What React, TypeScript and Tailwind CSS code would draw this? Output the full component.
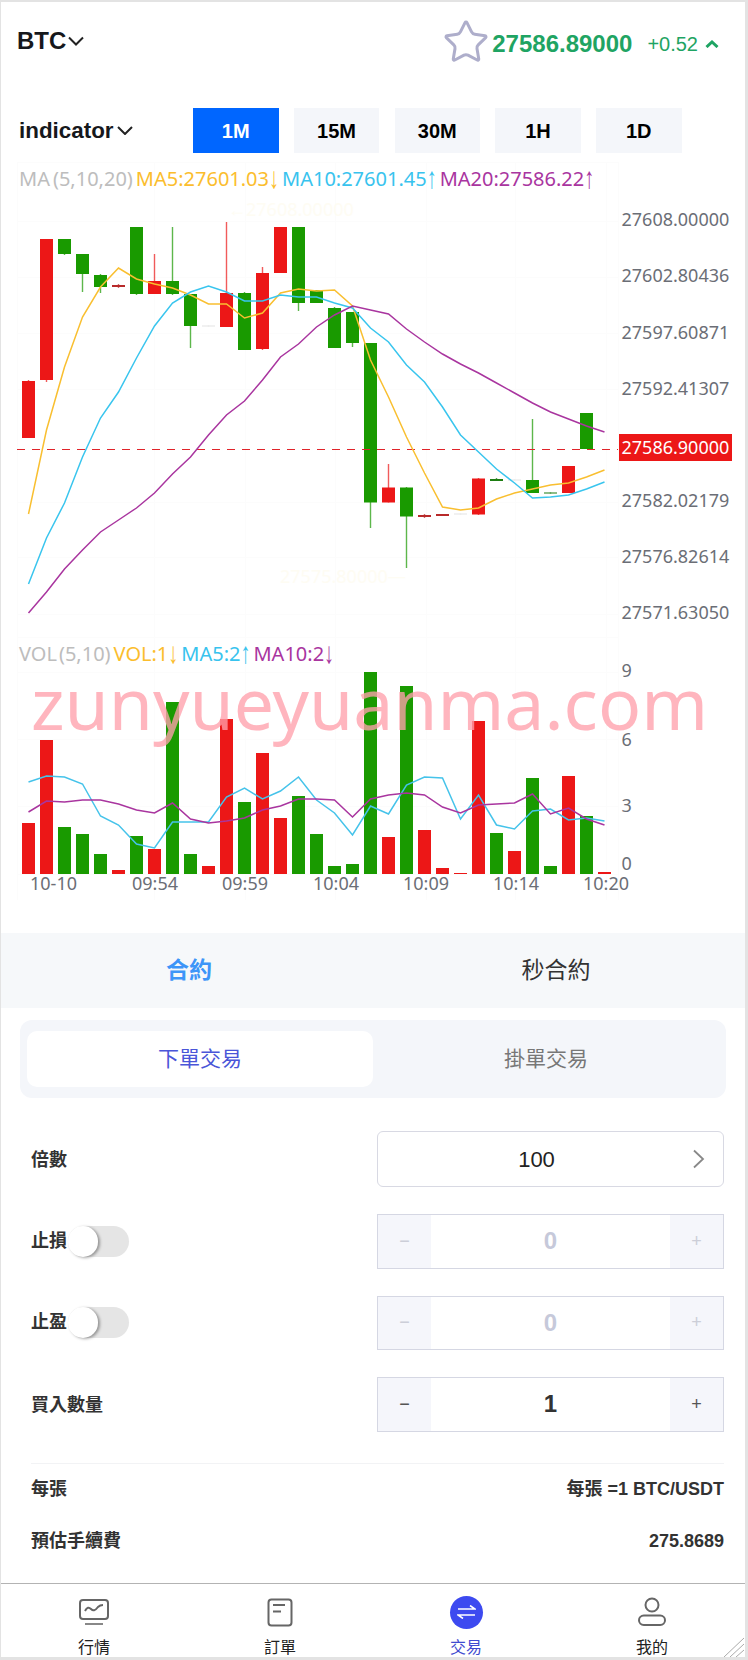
import { Star } from 'lucide-react'

const UP = '#199a00'
const DOWN = '#ec1717'

// top, bottom, wick top, wick bottom, colour - page coordinates
const candles: [number, number, number, number, string][] = [
  [381, 438, 380, 438, DOWN],
  [239, 380, 239, 382, DOWN],
  [239, 254, 239, 255, UP],
  [254, 274, 254, 292, UP],
  [275, 287, 274, 293, UP],
  [285, 287, 284, 288, '#b82a2a'],
  [227, 294, 227, 295, UP],
  [281, 294, 254, 294, DOWN],
  [281, 294, 227, 295, UP],
  [294, 326, 294, 348, UP],
  [325.5, 326.5, 325.5, 326.5, '#e4e4e4'],
  [293, 327, 222, 327, DOWN],
  [293, 350, 292, 350, UP],
  [273, 349, 267, 350, DOWN],
  [227, 273, 227, 273, DOWN],
  [227, 303, 227, 311, UP],
  [290, 303, 290, 303, UP],
  [308, 348, 307, 348, UP],
  [312, 343, 312, 347, UP],
  [343, 502.5, 343, 528, UP],
  [487.5, 502.5, 464, 502.5, DOWN],
  [487.5, 516.5, 487, 568, UP],
  [515, 517, 514, 518, '#b82a2a'],
  [514, 516, 514, 516, '#b82a2a'],
  [513.5, 514.5, 513.5, 514.5, '#e4e4e4'],
  [478.5, 514.5, 478, 515, DOWN],
  [479, 481, 478, 481, '#1d7d12'],
  [479.5, 480.5, 479.5, 480.5, '#e4e4e4'],
  [480, 493, 419, 493, UP],
  [492.5, 493.5, 492.5, 493.5, '#1d7d12'],
  [466, 493, 466, 493, DOWN],
  [413, 449, 413, 449, UP],
]

const ma5 = [514, 430, 367, 317, 287, 268, 279, 284, 288, 295, 304, 304, 318, 313, 293, 289, 291, 290, 306, 360, 397, 437, 473, 507, 510, 508, 499, 493, 489, 485, 483, 477, 470]
const ma10 = [584, 538, 503, 457, 418, 392, 358, 326, 303, 292, 286, 292, 301, 301, 295, 297, 297, 303, 308, 328, 342, 365, 382, 407, 435, 452, 469, 483, 498, 497, 495, 489, 482]
const ma20 = [613, 592, 569, 550, 532, 520, 508, 493, 474, 457, 435, 415, 401, 380, 357, 344, 327, 315, 306, 310, 314, 329, 342, 354, 364, 373, 383, 393, 403, 412, 419, 426, 432]

// top of each volume bar, baseline at 874
const volumes: [number, string][] = [
  [823, DOWN], [740, DOWN], [827, UP], [834, UP], [854, UP], [870, DOWN], [836, UP], [849, DOWN], [702, UP], [854, UP], [866, DOWN],
  [719, DOWN], [802, UP], [753, DOWN], [818, DOWN], [796, UP], [834, UP], [866, UP], [864, UP], [672, UP], [837, DOWN], [686, UP],
  [830, DOWN], [868, DOWN], [873, DOWN], [721, DOWN], [833, UP], [851, DOWN], [778, UP], [866, UP], [776, DOWN], [816, UP], [872, DOWN],
]
const volMa5 = [782, 776, 777, 784, 816, 825, 844, 848, 822, 822, 822, 797, 788, 799, 791, 777, 800, 813, 835, 806, 814, 785, 777, 778, 819, 795, 825, 829, 811, 809, 820, 818, 821]
const volMa10 = [812, 801, 802, 800, 800, 804, 810, 813, 803, 819, 823, 821, 818, 810, 806, 799, 799, 800, 817, 799, 795, 793, 795, 807, 813, 805, 804, 803, 794, 814, 808, 819, 825]

const priceLabels: [string, number][] = [
  ['27608.00000', 219],
  ['27602.80436', 275],
  ['27597.60871', 332],
  ['27592.41307', 388],
  ['27582.02179', 500],
  ['27576.82614', 556],
  ['27571.63050', 612],
]
const volLabels: [string, number][] = [
  ['9', 670],
  ['6', 739],
  ['3', 805],
  ['0', 863],
]
const timeLabels: [string, number][] = [
  ['10-10', 30],
  ['09:54', 132],
  ['09:59', 222],
  ['10:04', 313],
  ['10:09', 403],
  ['10:14', 493],
  ['10:20', 583],
]
const gridY = [162, 221, 277, 333, 389, 502, 557, 614, 637, 672, 739, 806, 874]
const gridX = [17, 154, 245, 335, 426, 515, 606, 618]

const points = (ys: number[]) => ys.map((y, i) => `${28.5 + i * 18},${y}`).join(' ')

const Chart = () => {
  return (
    <svg
      width={744}
      height={780}
      viewBox="1 153 744 780"
      className="font-['Noto_Sans',sans-serif] overflow-visible"
    >
      {gridY.map((y) => (
        <line key={y} x1={17} x2={618} y1={y + 0.5} y2={y + 0.5} stroke="#fcfcfc" />
      ))}
      {gridX.map((x) => (
        <line key={x} x1={x + 0.5} x2={x + 0.5} y1={162} y2={900} stroke="#fcfcfc" />
      ))}

      <text x={228} y={216} fontSize={18} fill="#fefcf3">←27608.00000</text>
      <text x={280} y={583} fontSize={18} fill="#fefcf3">27575.80000—</text>

      {candles.map(([top, bottom, wickTop, wickBottom, color], i) => (
        <g key={i}>
          <line x1={28.5 + i * 18} x2={28.5 + i * 18} y1={wickTop} y2={wickBottom} stroke={color} strokeWidth={1.4} opacity={0.7} />
          <rect x={22 + i * 18} y={top} width={13} height={bottom - top} fill={color} />
        </g>
      ))}

      <line x1={17} x2={618} y1={449.5} y2={449.5} stroke="#e0242a" strokeWidth={1.2} strokeDasharray="8 7" />

      <polyline points={points(ma5)} fill="none" stroke="#f9bf30" strokeWidth={1.5} />
      <polyline points={points(ma10)} fill="none" stroke="#39c5ee" strokeWidth={1.5} />
      <polyline points={points(ma20)} fill="none" stroke="#a9359f" strokeWidth={1.5} />

      {volumes.map(([top, color], i) => (
        <rect key={i} x={22 + i * 18} y={top} width={13} height={874 - top} fill={color} />
      ))}
      <polyline points={points(volMa5)} fill="none" stroke="#45c3ea" strokeWidth={1.5} />
      <polyline points={points(volMa10)} fill="none" stroke="#a9359f" strokeWidth={1.5} />

      {priceLabels.map(([label, y]) => (
        <text key={label} x={621.5} y={y} dominantBaseline="central" fontSize={18} fill="#6b6e76">{label}</text>
      ))}
      <rect x={619} y={434} width={113} height={27} fill="#ec1717" />
      <text x={621.5} y={447} dominantBaseline="central" fontSize={18} fill="#ffffff">27586.90000</text>

      {volLabels.map(([label, y]) => (
        <text key={label} x={621.5} y={y} dominantBaseline="central" fontSize={18} fill="#6b6e76">{label}</text>
      ))}
      {timeLabels.map(([label, x]) => (
        <text key={label} x={x} y={883} dominantBaseline="central" fontSize={18} fill="#6b6e76">{label}</text>
      ))}
    </svg>
  )
}

const Arrow = ({ up }: { up?: boolean }) => (
  <span className="inline-block scale-y-150 -translate-y-[2px] font-['Liberation_Sans',sans-serif]">{up ? '↑' : '↓'}</span>
)

const Legend = () => (
  <div className="absolute left-[18px] top-[12px] flex gap-[3px] text-[20px] leading-[28px] whitespace-nowrap font-['Noto_Sans',sans-serif]">
    <span className="text-[#bdbdbd]">MA<span className="ml-[3px]">(5,10,20)</span></span>
    <span className="text-[#fbbd2d]">MA5:27601.03<Arrow /></span>
    <span className="text-[#38c3ee]">MA10:27601.45<Arrow up /></span>
    <span className="text-[#a9359f]">MA20:27586.22<Arrow up /></span>
  </div>
)

const VolLegend = () => (
  <div className="absolute left-[18px] top-[487px] flex gap-[3px] text-[20px] leading-[28px] whitespace-nowrap font-['Noto_Sans',sans-serif]">
    <span className="text-[#bdbdbd]">VOL<span className="ml-[2px]">(5,10)</span></span>
    <span className="text-[#fbbd2d]">VOL:1<Arrow /></span>
    <span className="text-[#38c3ee]">MA5:2<Arrow up /></span>
    <span className="text-[#a9359f]">MA10:2<Arrow /></span>
  </div>
)

const Stepper = ({ value, disabled }: { value: string; disabled?: boolean }) => (
  <div className="w-[347px] h-[54.5px] flex border border-[#d5d7e3]">
    <div className={`w-[53px] flex items-center justify-center bg-[#f5f6fb] text-[18px] font-normal ${disabled ? 'text-[#ccced8]' : 'text-[#555555]'}`}>−</div>
    <div className={`flex-1 flex items-center justify-center text-[24px] font-bold ${disabled ? 'text-[#c6c9da]' : 'text-[#333333]'}`}>{value}</div>
    <div className={`w-[53px] flex items-center justify-center bg-[#f5f6fb] text-[18px] font-normal ${disabled ? 'text-[#ccced8]' : 'text-[#555555]'}`}>+</div>
  </div>
)

const Toggle = () => (
  <div className="ml-[1px] w-[61px] h-[31px] shrink-0 rounded-full bg-[#e5e5e5]">
    <div className="w-[30px] h-[31px] rounded-full bg-white shadow-[2px_1px_3px_rgba(0,0,0,0.35)]" />
  </div>
)

const Row = ({ children, className }: { children: React.ReactNode; className?: string }) => (
  <div className={`flex items-center justify-between text-[18px] font-bold text-[#333333] ${className ?? ''}`}>
    {children}
  </div>
)

const TabItem = ({ label, active, children }: { label: string; active?: boolean; children: React.ReactNode }) => (
  <div className="flex-1 flex flex-col items-center">
    <div className="h-[46px] mt-[5px] flex items-center justify-center">{children}</div>
    <span className={`text-[16px] leading-[18px] mt-[4px] ${active ? 'text-[#3f4bd0]' : 'text-[#222222]'}`}>{label}</span>
  </div>
)

export default function App() {
  return (
    <div className="relative w-[748px] h-[1660px] flex flex-col bg-white border-l border-r-[3px] border-t-2 border-b-[3px] border-[#e3e3e3] font-['Liberation_Sans','Noto_Sans_CJK_TC',sans-serif] overflow-hidden">
      <header className="h-[80px] flex items-center justify-between pl-[16px] pr-[25px]">
        <div className="flex items-center gap-[2px] text-[24px] font-bold text-[#16181c] mt-[-2px]">
          BTC
          <svg width={16} height={10} viewBox="0 0 16 10" fill="none" stroke="#222222" strokeWidth={2}>
            <path d="M1 1.5l7 7 7-7" />
          </svg>
        </div>
        <div className="flex items-center mt-[3px]">
          <Star size={48} strokeWidth={1.5} className="text-[#aeaecb] mt-[-3px]" />
          <span className="ml-[2px] text-[24px] font-bold text-[#1fa463]">27586.89000</span>
          <span className="ml-[15px] text-[20px] text-[#1fa463]">+0.52</span>
          <svg width={16} height={8} viewBox="0 0 16 8" fill="none" stroke="#1fa463" strokeWidth={3} className="ml-[6px]">
            <path d="M2.5 7l5.5-5 5.500 5" />
          </svg>
        </div>
      </header>

      <div className="mt-[26px] h-[45px] flex items-center pl-[18px]">
        <div className="w-[174px] flex items-center gap-[3px] text-[22.4px] font-bold text-[#16181c]">
          indicator
          <svg width={16} height={9} viewBox="0 0 16 9" fill="none" stroke="#222222" strokeWidth={2}>
            <path d="M1 1l7 7 7-7" />
          </svg>
        </div>
        <div className="flex gap-[15.25px]">
          {['1M', '15M', '30M', '1H', '1D'].map((label, i) => (
            <div
              key={label}
              className={`w-[85.5px] h-[45px] flex items-center justify-center text-[20px] font-bold ${i === 0 ? 'bg-[#0066ff] text-white' : 'bg-[#f4f6fa] text-black'}`}
            >
              {label}
            </div>
          ))}
        </div>
      </div>

      <div className="relative h-[780px]">
        <Chart />
        <Legend />
        <VolLegend />
        <div className="absolute left-[30px] top-[505px] text-[71.5px] leading-[90px] whitespace-nowrap text-[rgba(255,160,172,0.78)] font-['Noto_Sans',sans-serif]">
          zunyueyuanma.com
        </div>
      </div>

      <div className="h-[75px] flex items-center bg-[#f6f8fa] text-[23px] text-[#333333]">
        <div className="w-[376px] text-center font-bold text-[#3d95f8]">合約</div>
        <div className="w-[358px] text-center">秒合約</div>
      </div>

      <div className="flex-1 flex flex-col">
        <div className="mt-[12px] mx-[19px] h-[78px] flex py-[11px] pl-[7px] rounded-[12px] bg-[#f4f6fa] text-[21px]">
          <div className="w-[346px] flex items-center justify-center rounded-[10px] bg-white text-[#4a55d8]">下單交易</div>
          <div className="w-[346px] flex items-center justify-center text-[#777777]">掛單交易</div>
        </div>

        <div className="mt-[33px] pl-[30px] pr-[21px] flex flex-col">
          <Row>
            <span className="mt-[2px]">倍數</span>
            <div className="relative w-[347px] h-[56px] flex items-center justify-center rounded-[6px] border border-[#d8d9e3] text-[22px] font-normal text-[#222222] pr-[28px]">
              100
              <svg width={13} height={20} viewBox="0 0 13 20" fill="none" stroke="#888888" strokeWidth={1.8} className="absolute right-[18px] top-[17px]">
                <path d="M2 1.500l9 8.500-9 8.500" />
              </svg>
            </div>
          </Row>
          <Row className="mt-[27px]">
            <div className="flex items-center">止損<Toggle /></div>
            <Stepper value="0" disabled />
          </Row>
          <Row className="mt-[27px]">
            <div className="flex items-center">止盈<Toggle /></div>
            <Stepper value="0" disabled />
          </Row>
          <Row className="mt-[27px]">
            <span className="mt-[3px]">買入數量</span>
            <Stepper value="1" />
          </Row>
          <div className="mt-[31px] h-px bg-[#f2f3f5]" />
          <Row className="h-[52px]">
            每張
            <span>每張 =1 BTC/USDT</span>
          </Row>
          <Row className="h-[52px]">
            預估手續費
            <span>275.8689</span>
          </Row>
        </div>
      </div>

      <nav className="h-[74px] flex border-t border-[#b3b3b3]">
        <TabItem label="行情">
          <svg width={32} height={28} viewBox="0 0 32 28" fill="none" stroke="#666666" strokeWidth={2}>
            <rect x={2} y={2} width={28} height={19} rx={3} />
            <path d="M7 13c2-4 4-4 6-2s4 2 7-2c1-1 3-2 5-2" />
            <path d="M7 26h18" strokeWidth={2} stroke="#888888" />
          </svg>
        </TabItem>
        <TabItem label="訂單">
          <svg width={26} height={29} viewBox="0 0 26 29" fill="none" stroke="#666666" strokeWidth={2}>
            <rect x={1.500} y={1.500} width={23} height={26} rx={3} />
            <path d="M6 7h12M6 13.500h8" />
          </svg>
        </TabItem>
        <TabItem label="交易" active>
          <div className="w-[33px] h-[33px] rounded-full bg-[#3d4af0] flex items-center justify-center">
            <svg width={19} height={14} viewBox="0 0 19 14" fill="none" stroke="#ffffff" strokeWidth={1.6}>
              <path d="M1 4h17l-5-3.500M18 10H1l5 3.500" />
            </svg>
          </div>
        </TabItem>
        <TabItem label="我的">
          <svg width={30} height={30} viewBox="0 0 30 30" fill="none" stroke="#666666" strokeWidth={2}>
            <circle cx={15} cy={8} r={6.500} />
            <rect x={2} y={18.500} width={26} height={9.500} rx={4.750} />
          </svg>
        </TabItem>
      </nav>

      <svg width={21} height={20} viewBox="0 0 21 20" stroke="#aaaaaa" strokeWidth={1} className="absolute right-0 bottom-0">
        <path d="M0 20L20 1M6 20L20 7M12 20l8-7" />
      </svg>
    </div>
  )
}
